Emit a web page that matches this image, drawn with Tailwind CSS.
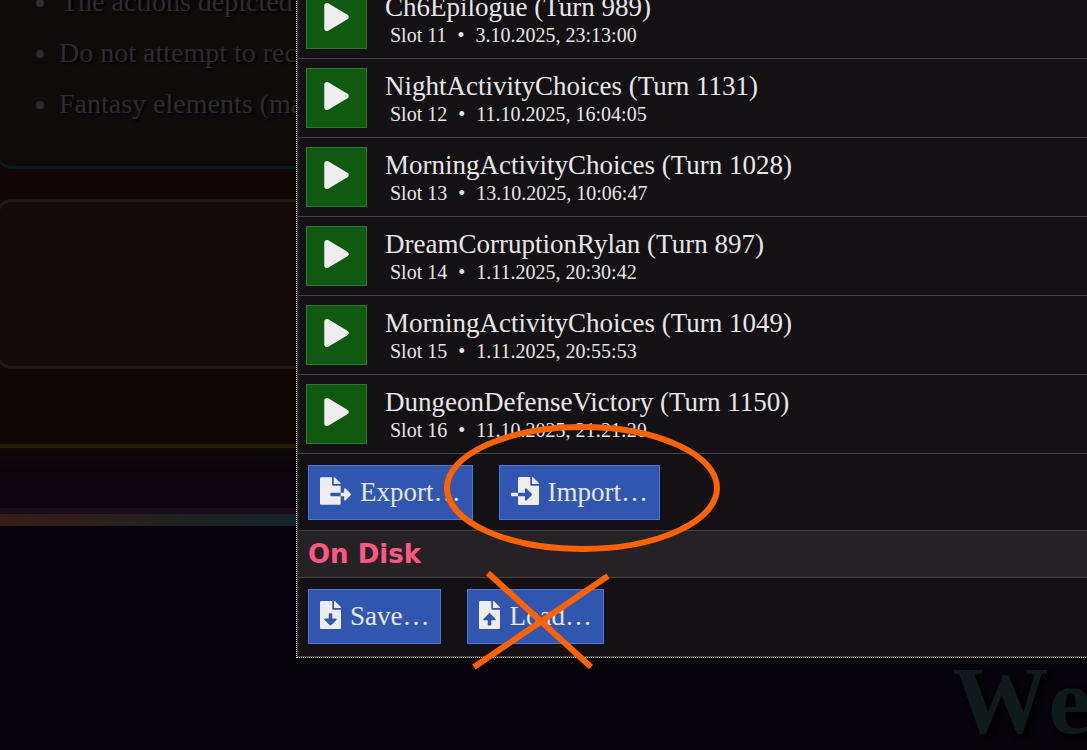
<!DOCTYPE html>
<html lang="en">
<head>
    <meta charset="UTF-8">
    <meta name="viewport" content="width=device-width, initial-scale=1.0">
    <title>Saves</title>
    <script src="https://cdn.jsdelivr.net/npm/@tailwindcss/browser@4"></script>
</head>
<body class="bg-[#06030a] font-['Liberation_Serif',serif]">
    <div class="relative w-full h-screen overflow-hidden">
        <!-- Dimmed page behind the dialog -->
        <main class="w-full text-[28px] text-[#2e2b31]">
            <div class="bg-linear-to-b from-[#120607] to-[#120707] -ml-1">
                <div class="bg-[#0e0b0b] border-[3px] border-t-0 border-[#10181a] rounded-b-2xl pb-[37px]">
                    <ul class="list-disc pl-[60px] -mt-6 leading-[51px] text-shadow-[2px_2px_2px_#000] whitespace-nowrap">
                        <li class="pl-0.5">The actions depicted</li>
                        <li>Do not attempt to recreate</li>
                        <li>Fantasy elements (magic)</li>
                    </ul>
                </div>
                <div class="mt-[30px] h-[170px] bg-[#150b0c] border-[3px] border-[#231a14] rounded-2xl"></div>
                <div class="h-[75px] bg-linear-to-b from-[#120607] from-70% to-[#0e0907]"></div>
            </div>
            <div class="h-1 bg-[#2a1c05]"></div>
            <div class="h-[60px] bg-linear-to-b from-[#0f0a08] via-[#0b040d] via-35% to-[#0d030d]"></div>
            <div class="h-[6px] bg-[#1b0b1b]"></div>
            <div class="h-3 bg-linear-to-r from-[#381c19] via-[#222120] via-15% to-[#12252b] to-28%"></div>
            <h1 class="mt-[119px] -mr-1 text-right text-8xl leading-[112px] font-bold [font-kerning:none] text-[#0e1a1b] text-shadow-[4px_4px_6px_#000]">We</h1>
        </main>

        <!-- Saves dialog -->
        <div class="absolute -top-5 left-[297px] -right-1 bg-[#131113] border border-t-0 border-[#444] outline outline-dotted outline-[#eee] text-[27px] text-[#e8e6e9]">
            <ul class="leading-8">
                <li class="flex items-center gap-[18px] px-2 py-[9px] border-b border-[#444]">
                    <button class="w-[61px] h-[60px] flex items-center justify-center bg-[#0f5911] border border-[#297a2b]" aria-label="Load slot 11">
                        <svg class="h-7 w-[25px] -mt-1" viewBox="0 0 448 512" fill="#f0edf1"><path d="M424.4 214.7L72.4 6.6C43.8-10.3 0 6.1 0 47.9V464c0 37.5 40.7 60.1 72.4 41.3l352-208c31.4-18.5 31.5-64.1 0-82.6z"/></svg>
                    </button>
                    <div>
                        <div>Ch6Epilogue (Turn 989)</div>
                        <div class="flex gap-[11px] pl-[5px] text-xl leading-6"><span>Slot 11</span><span>•</span><span>3.10.2025, 23:13:00</span></div>
                    </div>
                </li>
                <li class="flex items-center gap-[18px] px-2 py-[9px] border-b border-[#444]">
                    <button class="w-[61px] h-[60px] flex items-center justify-center bg-[#0f5911] border border-[#297a2b]" aria-label="Load slot 12">
                        <svg class="h-7 w-[25px] -mt-1" viewBox="0 0 448 512" fill="#f0edf1"><path d="M424.4 214.7L72.4 6.6C43.8-10.3 0 6.1 0 47.9V464c0 37.5 40.7 60.1 72.4 41.3l352-208c31.4-18.5 31.5-64.1 0-82.6z"/></svg>
                    </button>
                    <div>
                        <div>NightActivityChoices (Turn 1131)</div>
                        <div class="flex gap-[11px] pl-[5px] text-xl leading-6"><span>Slot 12</span><span>•</span><span>11.10.2025, 16:04:05</span></div>
                    </div>
                </li>
                <li class="flex items-center gap-[18px] px-2 py-[9px] border-b border-[#444]">
                    <button class="w-[61px] h-[60px] flex items-center justify-center bg-[#0f5911] border border-[#297a2b]" aria-label="Load slot 13">
                        <svg class="h-7 w-[25px] -mt-1" viewBox="0 0 448 512" fill="#f0edf1"><path d="M424.4 214.7L72.4 6.6C43.8-10.3 0 6.1 0 47.9V464c0 37.5 40.7 60.1 72.4 41.3l352-208c31.4-18.5 31.5-64.1 0-82.6z"/></svg>
                    </button>
                    <div>
                        <div>MorningActivityChoices (Turn 1028)</div>
                        <div class="flex gap-[11px] pl-[5px] text-xl leading-6"><span>Slot 13</span><span>•</span><span>13.10.2025, 10:06:47</span></div>
                    </div>
                </li>
                <li class="flex items-center gap-[18px] px-2 py-[9px] border-b border-[#444]">
                    <button class="w-[61px] h-[60px] flex items-center justify-center bg-[#0f5911] border border-[#297a2b]" aria-label="Load slot 14">
                        <svg class="h-7 w-[25px] -mt-1" viewBox="0 0 448 512" fill="#f0edf1"><path d="M424.4 214.7L72.4 6.6C43.8-10.3 0 6.1 0 47.9V464c0 37.5 40.7 60.1 72.4 41.3l352-208c31.4-18.5 31.5-64.1 0-82.6z"/></svg>
                    </button>
                    <div>
                        <div>DreamCorruptionRylan (Turn 897)</div>
                        <div class="flex gap-[11px] pl-[5px] text-xl leading-6"><span>Slot 14</span><span>•</span><span>1.11.2025, 20:30:42</span></div>
                    </div>
                </li>
                <li class="flex items-center gap-[18px] px-2 py-[9px] border-b border-[#444]">
                    <button class="w-[61px] h-[60px] flex items-center justify-center bg-[#0f5911] border border-[#297a2b]" aria-label="Load slot 15">
                        <svg class="h-7 w-[25px] -mt-1" viewBox="0 0 448 512" fill="#f0edf1"><path d="M424.4 214.7L72.4 6.6C43.8-10.3 0 6.1 0 47.9V464c0 37.5 40.7 60.1 72.4 41.3l352-208c31.4-18.5 31.5-64.1 0-82.6z"/></svg>
                    </button>
                    <div>
                        <div>MorningActivityChoices (Turn 1049)</div>
                        <div class="flex gap-[11px] pl-[5px] text-xl leading-6"><span>Slot 15</span><span>•</span><span>1.11.2025, 20:55:53</span></div>
                    </div>
                </li>
                <li class="flex items-center gap-[18px] px-2 py-[9px] border-b border-[#444]">
                    <button class="w-[61px] h-[60px] flex items-center justify-center bg-[#0f5911] border border-[#297a2b]" aria-label="Load slot 16">
                        <svg class="h-7 w-[25px] -mt-1" viewBox="0 0 448 512" fill="#f0edf1"><path d="M424.4 214.7L72.4 6.6C43.8-10.3 0 6.1 0 47.9V464c0 37.5 40.7 60.1 72.4 41.3l352-208c31.4-18.5 31.5-64.1 0-82.6z"/></svg>
                    </button>
                    <div>
                        <div>DungeonDefenseVictory (Turn 1150)</div>
                        <div class="flex gap-[11px] pl-[5px] text-xl leading-6"><span>Slot 16</span><span>•</span><span>11.10.2025, 21:21:20</span></div>
                    </div>
                </li>
            </ul>
            <div class="flex gap-[26px] px-[10px] pt-[11px] pb-[10px] border-b border-[#444]">
                <button class="h-[55px] px-[11px] flex items-center gap-[9px] bg-[#3156b0] border border-[#4d77d6]">
                    <svg class="h-7 w-[31px] -mt-1" viewBox="0 0 576 512" fill="#f0edf1"><path d="M384 121.9c0-6.3-2.5-12.4-7-16.9L279.1 7c-4.5-4.5-10.6-7-17-7H256v128h128zM571 308l-95.7-96.4c-10.1-10.1-27.4-3-27.4 11.3V288h-64v64h64v65.2c0 14.3 17.3 21.4 27.4 11.3L571 332c6.6-6.6 6.6-17.4 0-24zm-379 28v-32c0-8.8 7.2-16 16-16h176V160H248c-13.2 0-24-10.8-24-24V0H24C10.7 0 0 10.7 0 24v464c0 13.3 10.7 24 24 24h336c13.3 0 24-10.7 24-24V352H208c-8.8 0-16-7.2-16-16z"/></svg>
                    Export…
                </button>
                <button class="h-[55px] px-[11px] flex items-center gap-[9px] bg-[#3156b0] border border-[#4d77d6]">
                    <svg class="h-7 w-7 -mt-1" viewBox="0 0 512 512" fill="#f0edf1"><path d="M16 288c-8.8 0-16 7.2-16 16v32c0 8.8 7.2 16 16 16h112v-64zm489-183L407.1 7c-4.5-4.5-10.6-7-17-7H384v128h128v-6.1c0-6.3-2.5-12.4-7-16.9zm-153 31V0H152c-13.3 0-24 10.7-24 24v264h128v-65.2c0-14.3 17.3-21.4 27.4-11.3L379 308c6.6 6.7 6.6 17.4 0 24l-95.7 96.4c-10.1 10.1-27.4 3-27.4-11.3V352H128v136c0 13.3 10.7 24 24 24h336c13.3 0 24-10.7 24-24V160H376c-13.2 0-24-10.8-24-24z"/></svg>
                    Import…
                </button>
            </div>
            <h2 class="px-[10px] py-[5px] text-[26px] leading-9 bg-[#242224] border-b border-[#444] font-['DejaVu_Sans',sans-serif] font-bold text-[#ff5783]">On Disk</h2>
            <div class="flex gap-[26px] px-[10px] pt-[11px] pb-3">
                <button class="h-[55px] px-[11px] flex items-center gap-[9px] bg-[#3156b0] border border-[#4d77d6]">
                    <svg class="h-7 w-[21px] -mt-1" viewBox="0 0 384 512" fill="#f0edf1"><path d="M224 136V0H24C10.7 0 0 10.7 0 24v464c0 13.3 10.7 24 24 24h336c13.3 0 24-10.7 24-24V160H248c-13.2 0-24-10.8-24-24zm76.45 211.36l-96.42 95.7c-6.65 6.61-17.39 6.61-24.04 0l-96.42-95.7C73.42 337.29 80.54 320 94.82 320H160v-80c0-8.84 7.16-16 16-16h32c8.84 0 16 7.16 16 16v80h65.18c14.28 0 21.4 17.29 11.27 27.36zM377 105L279.1 7c-4.5-4.5-10.6-7-17-7H256v128h128v-6.1c0-6.3-2.5-12.4-7-16.9z"/></svg>
                    Save…
                </button>
                <button class="h-[55px] px-[11px] flex items-center gap-[9px] bg-[#3156b0] border border-[#4d77d6]">
                    <svg class="h-7 w-[21px] -mt-1" viewBox="0 0 384 512" fill="#f0edf1"><path d="M224 136V0H24C10.7 0 0 10.7 0 24v464c0 13.3 10.7 24 24 24h336c13.3 0 24-10.7 24-24V160H248c-13.2 0-24-10.8-24-24zm65.18 216.01H224v80c0 8.84-7.16 16-16 16h-32c-8.84 0-16-7.16-16-16v-80H94.82c-14.28 0-21.41-17.29-11.27-27.36l96.42-95.7c6.65-6.61 17.39-6.61 24.04 0l96.42 95.7c10.15 10.07 3.03 27.36-11.25 27.36zM377 105L279.1 7c-4.5-4.5-10.6-7-17-7H256v128h128v-6.1c0-6.3-2.5-12.4-7-16.9z"/></svg>
                    Load…
                </button>
            </div>
        </div>

        <!-- Hand-drawn marks: use Import, not Load -->
        <svg class="absolute left-[440px] top-[420px] w-[284px] h-[252px] pointer-events-none" viewBox="440 420 284 252" fill="none" stroke="#ff6200" stroke-width="6">
            <ellipse cx="582" cy="488" rx="135" ry="61"/>
            <path d="M488 573L591 667M608 576L474 667"/>
        </svg>
    </div>
</body>
</html>
